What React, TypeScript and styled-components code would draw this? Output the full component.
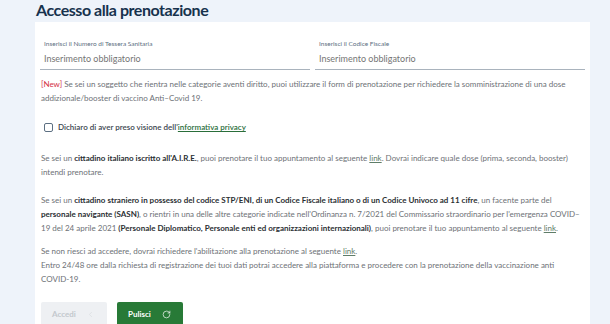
import React from 'react'
import styled, { createGlobalStyle } from 'styled-components'
import { RotateCw, ChevronLeft } from 'lucide-react'

const GlobalStyle = createGlobalStyle`
  body {
    margin: 0;
    background: #eef3fa;
    font-family: Lato, 'Noto Sans', sans-serif;
  }
`

const App = () => {
  return (
    <Page>
      <GlobalStyle />
      <Title>Accesso alla prenotazione</Title>
      <Card>
        <Fields>
          <Field>
            <Label>Inserisci il Numero di Tessera Sanitaria</Label>
            <Input type='text' placeholder='Inserimento obbligatorio' />
          </Field>
          <Field>
            <Label>Inserisci il Codice Fiscale</Label>
            <Input type='text' placeholder='Inserimento obbligatorio' />
          </Field>
        </Fields>

        <Text $top={7}>
          <New>[New]</New> Se sei un soggetto che rientra nelle categorie aventi diritto, puoi utilizzare il form di
          prenotazione per richiedere la somministrazione di una dose addizionale/booster di vaccino Anti–Covid 19.
        </Text>

        <CheckRow>
          <Box type='checkbox' />
          <span>
            Dichiaro di aver preso visione dell'<Link href='#'>informativa privacy</Link>
          </span>
        </CheckRow>

        <Text $top={17}>
          Se sei un <b>cittadino italiano iscritto all'A.I.R.E.</b>, puoi prenotare il tuo appuntamento al seguente{' '}
          <SoftLink href='#'>link</SoftLink>. Dovrai indicare quale dose (prima, seconda, booster) intendi prenotare.
        </Text>

        <Text $top={14}>
          Se sei un <b>cittadino straniero in possesso del codice STP/ENI, di un Codice Fiscale italiano o di un Codice
          Univoco ad 11 cifre</b>, un facente parte del <b>personale navigante (SASN)</b>, o rientri in una delle altre
          categorie indicate nell'Ordinanza n. 7/2021 del Commissario straordinario per l'emergenza COVID–19 del 24
          aprile 2021 <b>(Personale Diplomatico, Personale enti ed organizzazioni internazionali)</b>, puoi prenotare il
          tuo appuntamento al seguente <SoftLink href='#'>link</SoftLink>.
        </Text>

        <Text $top={9}>
          Se non riesci ad accedere, dovrai richiedere l'abilitazione alla prenotazione al seguente{' '}
          <SoftLink href='#'>link</SoftLink>.
          <br />
          Entro 24/48 ore dalla richiesta di registrazione dei tuoi dati potrai accedere alla piattaforma e procedere
          con la prenotazione della vaccinazione anti <NoWrap>COVID-19.</NoWrap>
        </Text>

        <Actions>
          <Button disabled>
            Accedi
            <ChevronLeft size={9} strokeWidth={1.5} />
          </Button>
          <Button $primary>
            Pulisci
            <RotateCw size={9} strokeWidth={1.8} />
          </Button>
        </Actions>
      </Card>
    </Page>
  )
}

export default App

const Page = styled.div`
  height: 324px;
  overflow: hidden;
  padding: 0 20px 0 35px;
  box-sizing: border-box;
  background: #eef3fa;
`

const Title = styled.h1`
  margin: 0;
  padding-left: 1px;
  height: 22px;
  line-height: 20px;
  font-size: 16px;
  letter-spacing: -0.45px;
  font-weight: 700;
  color: #17324d;
`

const Card = styled.div`
  background: #fff;
  padding: 0 5px 0 6px;
  min-height: 302px;
`

const Fields = styled.div`
  display: grid;
  grid-template-columns: 1fr 1fr;
  gap: 5px;
  margin-left: -1px;
`

const Field = styled.div`
  padding-top: 18px;
  border-bottom: 1px solid #a9b3bd;
`

const Label = styled.label`
  display: block;
  padding-left: 4px;
  font-size: 6.5px;
  line-height: 8px;
  color: #5c6f82;
`

const Input = styled.input`
  display: block;
  width: 100%;
  box-sizing: border-box;
  height: 21px;
  padding: 0 4px;
  border: 0;
  outline: none;
  font-family: inherit;
  font-size: 9px;
  color: #5c6f82;
  background: transparent;
  ::placeholder {
    color: #6b7a89;
  }
`

const Text = styled.p<{ $top: number }>`
  margin: ${(p) => p.$top}px 0 0;
  font-size: 8px;
  line-height: 14px;
  color: #6d7176;
  b {
    font-weight: 700;
    color: #2b2f33;
  }
`

const NoWrap = styled.span`
  white-space: nowrap;
`

const New = styled.span`
  color: #d3303f;
`

const CheckRow = styled.label`
  display: flex;
  align-items: center;
  gap: 5px;
  margin-top: 15px;
  padding-left: 3px;
  height: 14px;
  font-size: 8px;
  font-weight: 600;
  color: #3b4650;
`

const Box = styled.input`
  appearance: none;
  margin: 0;
  width: 9px;
  height: 9px;
  border: 1px solid #5c6f82;
  border-radius: 2px;
  background: #fff;
`

const Link = styled.a`
  color: #2a6e3a;
  text-decoration: underline;
`

const SoftLink = styled.a`
  color: #5f7d69;
  text-decoration: underline;
`

const Actions = styled.div`
  display: flex;
  gap: 10px;
  margin-top: 16px;
`

const Button = styled.button<{ $primary?: boolean }>`
  display: flex;
  align-items: center;
  justify-content: space-between;
  width: 66px;
  height: 24px;
  padding: 0 12px 0 11px;
  border: 0;
  border-radius: 2px;
  font-family: inherit;
  font-size: 8px;
  font-weight: 700;
  background: ${(p) => (p.$primary ? '#287a37' : '#eef0f3')};
  color: ${(p) => (p.$primary ? '#fff' : '#c3c8cd')};
  svg {
    color: ${(p) => (p.$primary ? '#fff' : '#d4d8dc')};
  }
`
